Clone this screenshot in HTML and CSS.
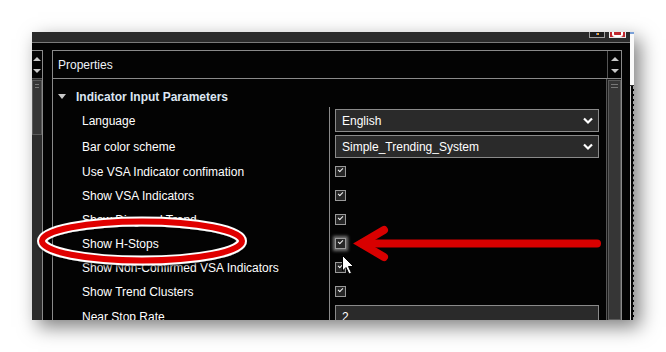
FILE: index.html
```html
<!DOCTYPE html>
<html lang="en">

  <head>
    <meta charset="UTF-8">
    <title>Properties - Indicator Input Parameters</title>
    <link rel="stylesheet" href="styles.css">
  </head>

  <body>

    <div class="frame">
      <div class="window">
        <div class="titlebar">
          <span class="tb-btn tb-min"><i></i></span>
          <span class="tb-btn tb-close"><i></i></span>
        </div>

        <div class="client">
          <!-- left docked panel, mostly cut off -->
          <div class="side">
            <div class="side-head">
              <span class="arrow-up"></span>
              <span class="arrow-down"></span>
            </div>
            <div class="side-track">
              <div class="thumb"><b></b><b></b></div>
            </div>
          </div>

          <div class="props">
            <div class="props-head">
              <div class="props-title">Properties</div>
              <div class="head-scroll">
                <span class="arrow-up"></span>
                <span class="arrow-down"></span>
              </div>
            </div>

            <div class="props-body">
              <div class="grid">
                <div class="group"><span class="caret"></span>Indicator Input Parameters</div>

                <div class="row tall">
                  <div class="name">Language</div>
                  <div class="value">
                    <div class="select">English
                      <svg class="chev" width="10" height="8" viewBox="0 0 10 8"><polyline points="1,1.5 5,5.5 9,1.5" /></svg>
                    </div>
                  </div>
                </div>
                <div class="row tall">
                  <div class="name">Bar color scheme</div>
                  <div class="value">
                    <div class="select">Simple_Trending_System
                      <svg class="chev" width="10" height="8" viewBox="0 0 10 8"><polyline points="1,1.5 5,5.5 9,1.5" /></svg>
                    </div>
                  </div>
                </div>
                <div class="row">
                  <div class="name">Use VSA Indicator confimation</div>
                  <div class="value"><span class="check"></span></div>
                </div>
                <div class="row">
                  <div class="name">Show VSA Indicators</div>
                  <div class="value"><span class="check"></span></div>
                </div>
                <div class="row">
                  <div class="name">Show Diagonal Trend</div>
                  <div class="value"><span class="check"></span></div>
                </div>
                <div class="row">
                  <div class="name">Show H-Stops</div>
                  <div class="value"><span class="check focus"></span></div>
                </div>
                <div class="row">
                  <div class="name">Show Non-Confirmed VSA Indicators</div>
                  <div class="value"><span class="check"></span></div>
                </div>
                <div class="row">
                  <div class="name">Show Trend Clusters</div>
                  <div class="value"><span class="check"></span></div>
                </div>
                <div class="row tall">
                  <div class="name">Near Stop Rate</div>
                  <div class="value"><div class="input">2</div></div>
                </div>
              </div>

              <div class="vscroll">
                <div class="thumb"><b></b><b></b></div>
              </div>
            </div>
          </div>
        </div>
      </div>

      <div class="strip">
        <div class="strip-top"></div>
        <div class="strip-bot"></div>
      </div>
    </div>

    <!-- annotation layer drawn over the screenshot -->
    <svg class="marks" width="666" height="352" viewBox="0 0 666 352">
      <defs>
        <filter id="soft" x="-20%" y="-50%" width="140%" height="200%">
          <feDropShadow dx="1" dy="2" stdDeviation="1.5" flood-color="#000" flood-opacity="0.6" />
        </filter>
      </defs>
      <g filter="url(#soft)">
        <ellipse cx="142" cy="241" rx="100" ry="19.5" fill="none" stroke="#fff" stroke-width="10" />
        <ellipse cx="142" cy="241" rx="100" ry="19.5" fill="none" stroke="#e00000" stroke-width="6" />
      </g>
      <g fill="none" stroke="#d80000" stroke-width="8" stroke-linecap="round">
        <line x1="362" y1="243.5" x2="597" y2="243.5" />
        <polyline points="384,230 361,243.5 384,257" stroke-linejoin="miter" stroke-miterlimit="6" />
      </g>
      <path class="cursor" d="M342.5 255.5 L342.5 271 L346 267.5 L349 274 L351.5 273 L348.5 266.5 L353.5 266.5 Z" />
    </svg>

  </body>

</html>
```

FILE: styles.css
```css
body {
  font-family: "Liberation Sans", Arial, sans-serif;
  font-size: 12px;
  color: #fff;
  background-color: #fff;
  margin: 0;
  position: relative;
  width: 666px;
  height: 352px;
  overflow: hidden;
}

.frame {
  display: flex;
  width: 602px;
  height: 288px;
  margin: 32px 0 0 32px;
  box-shadow: 6px 7px 18px rgba(0, 0, 0, 0.5);
}

.window {
  width: 598px;
  display: flex;
  flex-direction: column;
  background-color: #030303;
}

/* title bar */
.titlebar {
  height: 10px;
  background-color: #2a2a2a;
  border-bottom: 1px solid #7a7a7a;
  display: flex;
  justify-content: flex-end;
  gap: 4px;
  padding-right: 4px;
}

.tb-btn {
  width: 14px;
  height: 5px;
  border: 1px solid #a0a0a0;
  border-top: none;
  display: flex;
  justify-content: center;
}

.tb-min {
  background-color: #1c1c1c;
}

.tb-min i {
  width: 3px;
  height: 2px;
  margin-top: 1px;
  background: linear-gradient(to right, #3c7de0 50%, #f0a030 50%);
}

.tb-close {
  width: 15px;
  background-color: #c0272d;
  border-color: #e8e8e8;
}

.tb-close i {
  width: 7px;
  height: 3px;
  border: 2px solid #fff;
  border-top: none;
  border-radius: 0 0 3px 3px;
}

/* client area */
.client {
  flex: 1;
  display: flex;
  padding-top: 7px;
  min-height: 0;
}

.side {
  width: 10px;
  border-top: 1px solid #8a8a8a;
  border-right: 1px solid #8a8a8a;
  display: flex;
  flex-direction: column;
}

.side-head,
.head-scroll {
  height: 27px;
  display: flex;
  flex-direction: column;
  align-items: center;
  justify-content: center;
  gap: 8px;
}

.side-head {
  border-bottom: 1px solid #555;
}

.arrow-up,
.arrow-down {
  width: 0;
  height: 0;
  border-left: 4px solid transparent;
  border-right: 4px solid transparent;
}

.arrow-up {
  border-bottom: 4px solid #c8c8c8;
}

.arrow-down {
  border-top: 4px solid #c8c8c8;
}

.side-track {
  flex: 1;
  background-color: #2c2c2c;
  padding-top: 1px;
}

.side-track .thumb {
  height: 55px;
}

.thumb {
  background-color: #363636;
  border: 1px solid #5a5a5a;
  padding: 3px 2px 0;
  height: 100%;
  box-sizing: border-box;
}

.thumb b {
  display: block;
  height: 1px;
  background-color: #777;
  margin-bottom: 2px;
}

/* properties panel */
.props {
  width: 570px;
  margin-left: 9px;
  border: 1px solid #8a8a8a;
  border-bottom: none;
  display: flex;
  flex-direction: column;
  box-sizing: border-box;
}

.props-head {
  height: 27px;
  border-bottom: 1px solid #8a8a8a;
  display: flex;
}

.props-title {
  flex: 1;
  padding: 1px 0 0 5px;
  line-height: 27px;
  color: #eef2f8;
}

.head-scroll {
  width: 13px;
  border-left: 1px solid #555;
}

.props-body {
  flex: 1;
  display: flex;
  min-height: 0;
  overflow: hidden;
}

.grid {
  flex: 1;
}

.vscroll {
  width: 13px;
  border-left: 1px solid #555;
  background-color: #1a1a1a;
  padding: 1px 0 0 1px;
}

.group {
  height: 28px;
  box-sizing: border-box;
  padding: 7px 0 0 5px;
  line-height: 16px;
  font-weight: bold;
  color: #dde6f2;
  display: flex;
  align-items: center;
}

.caret {
  width: 0;
  height: 0;
  border-left: 4px solid transparent;
  border-right: 4px solid transparent;
  border-top: 5px solid #c8c8c8;
  margin-right: 10px;
}

.row {
  height: 24px;
  display: flex;
}

.row.tall {
  height: 26px;
}

.name {
  width: 276px;
  padding: 1px 0 0 29px;
  line-height: 16px;
  align-self: center;
  box-sizing: border-box;
  white-space: nowrap;
}

.value {
  flex: 1;
  border-left: 1px solid #8a8a8a;
  padding: 0 7px 0 5px;
  display: flex;
  align-items: center;
}

.row.tall .value {
  align-items: flex-start;
  padding-top: 2px;
}

.select,
.input {
  flex: 1;
  height: 23px;
  box-sizing: border-box;
  border: 1px solid #8a8a8a;
  background-color: #2a2a2a;
  padding: 1px 5px 0 6px;
  line-height: 21px;
  display: flex;
  justify-content: space-between;
  align-items: center;
}

.input {
  height: 24px;
}

.chev {
  fill: none;
  stroke: #fff;
  stroke-width: 2.2;
}

.check {
  width: 11px;
  height: 11px;
  box-sizing: border-box;
  border: 1px solid #9a9a9a;
  background-color: #262626;
  position: relative;
}

.check::after {
  content: "";
  position: absolute;
  left: 2px;
  top: 1px;
  width: 4px;
  height: 2px;
  border-left: 1.5px solid #f0f0f0;
  border-bottom: 1.5px solid #f0f0f0;
  transform: rotate(-45deg);
}

.check.focus {
  box-shadow: 0 0 3px 2px rgba(255, 255, 255, 0.45);
}

/* edge of the next window */
.strip {
  width: 4px;
  display: flex;
  flex-direction: column;
}

.strip-top {
  height: 51px;
  background-color: #fafafa;
  border-top: 2px solid #7aa0d8;
  border-bottom: 1px solid #333;
}

.strip-bot {
  flex: 1;
  background-color: #050505;
  border-left: 1px solid #d8d8d8;
  border-right: 1px dashed #aaa;
}

.marks {
  position: absolute;
  left: 0;
  top: 0;
  pointer-events: none;
}

.cursor {
  fill: #fff;
  stroke: #000;
  stroke-width: 1;
}
```
